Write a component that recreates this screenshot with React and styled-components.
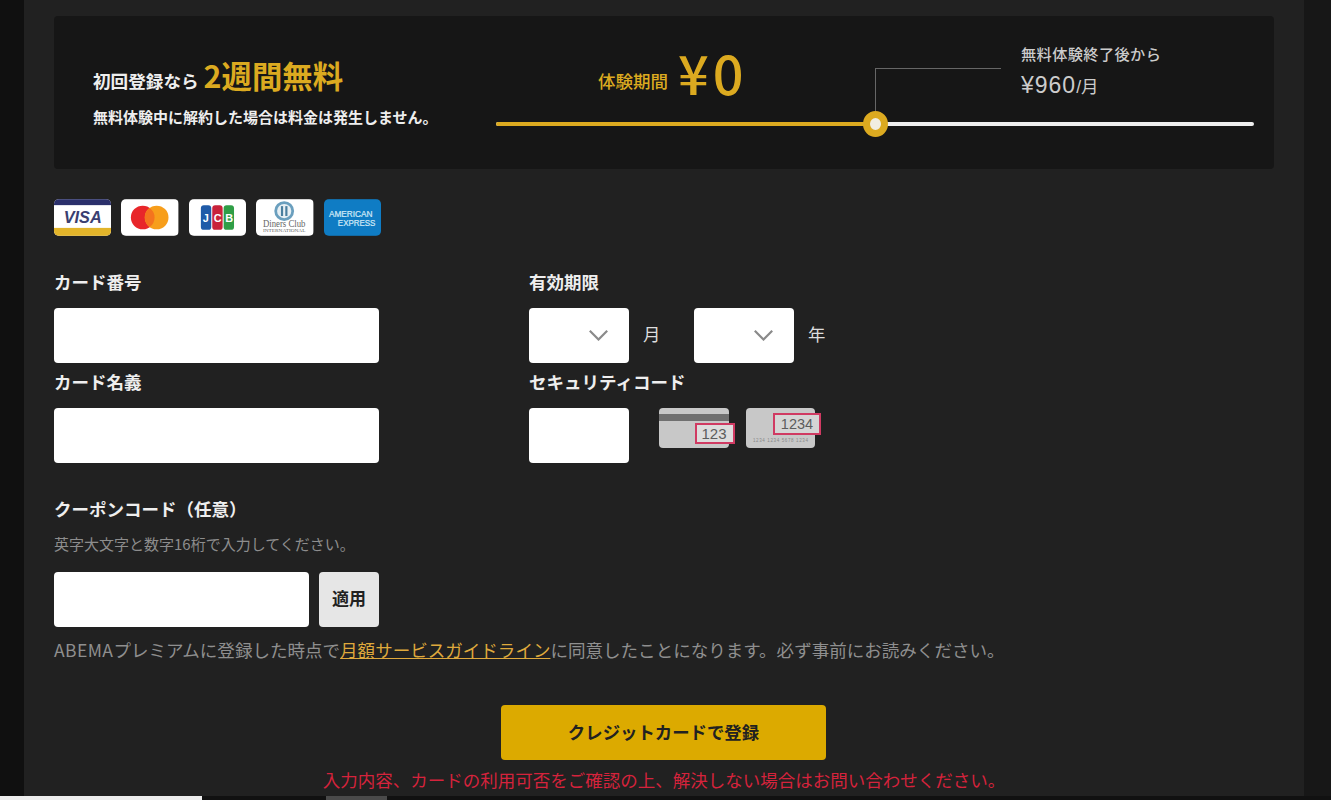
import React from "react";
import styled, { createGlobalStyle } from "styled-components";

const Global = createGlobalStyle`
  html, body { margin: 0; padding: 0; background: #111; }
  body { font-family: "Noto Sans CJK JP", "Noto Sans", sans-serif; }
  * { box-sizing: border-box; }
`;

const Page = styled.div`
  position: relative;
  height: 800px;
  overflow: hidden;
  padding: 0 27px 0 24px;
  background: linear-gradient(90deg, #101010 50%, #171717 50%);
`;
const Panel = styled.main`
  height: 800px;
  background: #212121;
  padding: 16px 30px 0;
`;
const Banner = styled.section`
  display: flex;
  height: 153px;
  background: #161616;
  border-radius: 4px;
  padding: 0 20px 0 39px;
`;
const Pitch = styled.div`
  width: 403px;
  flex: none;
  padding-top: 40px;
`;
const PitchHead = styled.div`
  display: flex;
  align-items: baseline;
  gap: 5px;
  height: 38px;
  color: #eee;
  font-size: 17.6px;
  font-weight: 700;
  line-height: 38px;
`;
const Accent = styled.span`
  color: #dcaa20;
  font-size: 30.4px;
  font-weight: 700;
`;
const PitchNote = styled.p`
  margin: 13px 0 0;
  color: #eee;
  font-size: 15px;
  font-weight: 700;
  line-height: 20px;
`;
const Timeline = styled.div`
  flex: 1;
  display: grid;
  grid-template-columns: 379px 1fr;
  grid-template-rows: 100px 16px;
`;
const TrialPrice = styled.div`
  display: flex;
  align-items: center;
  gap: 10px;
  padding: 12px 0 0 102px;
  color: #dcaa20;
`;
const TrialLabel = styled.span`
  font-size: 17.5px;
  font-weight: 500;
  padding-top: 16px;
`;
const TrialAmount = styled.span`
  font-size: 54px;
  font-weight: 500;
  line-height: 56px;
  letter-spacing: 4px;
`;
const AfterTrial = styled.div`
  position: relative;
  padding: 27px 0 0 146px;
  color: #ccc;
`;
const Connector = styled.span`
  position: absolute;
  left: 0;
  top: 52px;
  width: 126px;
  height: 48px;
  border-left: 1px solid #666;
  border-top: 1px solid #666;
`;
const AfterLabel = styled.div`
  font-size: 15.2px;
  line-height: 20px;
  letter-spacing: 0.4px;
  font-weight: 500;
`;
const AfterPrice = styled.div`
  margin-top: 8px;
  font-size: 23px;
  line-height: 28px;
  font-family: "Liberation Sans", "Noto Sans CJK JP", sans-serif;
  letter-spacing: 1px;
  small { font-size: 17.5px; font-weight: 400; letter-spacing: 0; }
`;
const Track = styled.div`
  grid-column: 1 / 3;
  position: relative;
  align-self: center;
  height: 4px;
  border-radius: 2px;
  background: #eee;
`;
const TrackFill = styled.div`
  width: 379px;
  height: 100%;
  border-radius: 2px;
  background: #dcaa20;
`;
const Knob = styled.span`
  position: absolute;
  left: 367px;
  top: -11px;
  width: 25px;
  height: 26px;
  border-radius: 50%;
  border: 7px solid #dcaa20;
  background: #f1eee2;
`;
const CardRow = styled.div`
  display: flex;
  gap: 10px;
  margin-top: 30px;
`;
const CardBadge = styled.svg`
  display: block;
  width: 57.4px;
  height: 37px;
  border-radius: 5px;
`;
const FormGrid = styled.div`
  display: grid;
  grid-template-columns: 475px 1fr;
  margin-top: 35px;
`;
const Field = styled.div`
  height: 100px;
`;
const Label = styled.div`
  color: #eee;
  font-size: 17.5px;
  font-weight: 700;
  line-height: 22px;
  height: 37px;
`;
const Input = styled.div`
  width: ${(p) => p.$w}px;
  height: 55px;
  background: #fff;
  border-radius: 4px;
`;
const Line = styled.div`
  display: flex;
  align-items: center;
`;
const SelectBox = styled.div`
  position: relative;
  width: 100px;
  height: 55px;
  background: #fff;
  border-radius: 4px;
`;
const Chevron = styled.svg`
  position: absolute;
  left: 60px;
  top: 22px;
  width: 19px;
  height: 11px;
`;
const Unit = styled.span`
  width: 65px;
  padding-left: 14px;
  padding-bottom: 5px;
  color: #ddd;
  font-size: 17.4px;
`;
const CvcArt = styled.svg`
  display: block;
  width: ${(p) => p.$w}px;
  height: 42px;
  margin-left: ${(p) => p.$ml}px;
  align-self: flex-start;
`;
const Coupon = styled.div`
  margin-top: 27px;
`;
const Hint = styled.p`
  margin: -1px 0 0;
  color: #8d8d8d;
  font-size: 15px;
  line-height: 20px;
`;
const CouponRow = styled.div`
  display: flex;
  gap: 10px;
  margin-top: 18px;
`;
const Apply = styled.button`
  width: 60px;
  height: 55px;
  border: 0;
  border-radius: 4px;
  background: #e6e6e6;
  color: #212121;
  font: 700 17px "Noto Sans CJK JP", sans-serif;
  padding: 0 0 5px;
`;
const Notice = styled.p`
  margin: 10px 0 0;
  color: #8f8f8f;
  font-size: 17.55px;
  line-height: 26px;
  white-space: nowrap;
  a { color: #dfa93c; text-decoration: underline; }
`;
const Brand = styled.span`
  letter-spacing: 0.4px;
`;
const Submit = styled.button`
  display: block;
  width: 325px;
  height: 55px;
  margin: 42px 0 0 447px;
  border: 0;
  border-radius: 4px;
  background: #dcaa00;
  color: #212121;
  font: 700 17.4px "Noto Sans CJK JP", sans-serif;
  padding: 0 0 3px;
`;
const ErrorText = styled.p`
  margin: 7px 0 0;
  color: #d5233c;
  font-size: 17.5px;
  line-height: 26px;
  text-align: center;
  white-space: nowrap;
`;
const BottomBar = styled.div`
  position: absolute;
  left: 0;
  right: 0;
  bottom: 0;
  height: 4px;
  display: flex;
  background: #111;
`;
const BarLight = styled.div`
  width: 202px;
  background: #eee;
`;
const BarThumb = styled.div`
  width: 61px;
  margin-left: 124px;
  background: #4a4a4a;
`;

const Visa = () => (
  <CardBadge viewBox="0 0 58 37">
    <rect width="58" height="37" fill="#fff" />
    <rect width="58" height="6" fill="#2a2f6b" />
    <rect y="29" width="58" height="8" fill="#e2b42a" />
    <text x="29" y="24" textAnchor="middle" fontFamily="Liberation Sans" fontSize="16.5" fontWeight="700" fontStyle="italic" fill="#3a3e70">VISA</text>
  </CardBadge>
);
const Master = () => (
  <CardBadge viewBox="0 0 58 37">
    <rect width="58" height="37" fill="#fff" />
    <circle cx="22" cy="18.5" r="12" fill="#e8262a" />
    <circle cx="36" cy="18.5" r="12" fill="#f79e1b" />
    <path d="M29 8.8a12 12 0 0 1 0 19.4a12 12 0 0 1 0-19.4z" fill="#f4741e" />
  </CardBadge>
);
const Jcb = () => (
  <CardBadge viewBox="0 0 58 37">
    <rect width="58" height="37" fill="#fff" />
    <rect x="12" y="6" width="10.5" height="25" rx="3" fill="#1f5ba8" />
    <rect x="23.5" y="6" width="10.5" height="25" rx="3" fill="#c8223a" />
    <rect x="35" y="6" width="10.5" height="25" rx="3" fill="#2f9e46" />
    <text x="17" y="23" textAnchor="middle" fontFamily="Liberation Sans" fontSize="11" fontWeight="700" fill="#fff">J</text>
    <text x="29" y="23" textAnchor="middle" fontFamily="Liberation Sans" fontSize="11" fontWeight="700" fill="#fff">C</text>
    <text x="40.5" y="23" textAnchor="middle" fontFamily="Liberation Sans" fontSize="11" fontWeight="700" fill="#fff">B</text>
  </CardBadge>
);
const Diners = () => (
  <CardBadge viewBox="0 0 58 37">
    <rect width="58" height="37" fill="#fff" />
    <circle cx="28.5" cy="12" r="10" fill="#6a9fbe" />
    <circle cx="28.5" cy="12" r="7.2" fill="#e8f0f4" />
    <rect x="25.2" y="7" width="2.2" height="10" fill="#4a7f9f" />
    <rect x="29.6" y="7" width="2.2" height="10" fill="#4a7f9f" />
    <text x="7" y="28" fontFamily="Liberation Serif" fontSize="10" fill="#666" textLength="43" lengthAdjust="spacingAndGlyphs">Diners Club</text>
    <text x="7" y="33.5" fontFamily="Liberation Serif" fontSize="4.4" fill="#666" textLength="43" lengthAdjust="spacingAndGlyphs">INTERNATIONAL</text>
  </CardBadge>
);
const Amex = () => (
  <CardBadge viewBox="0 0 58 37">
    <rect width="58" height="37" fill="#0f7cc4" />
    <text x="5" y="18" fontFamily="Liberation Sans" fontSize="9" fill="#cfe8f6" stroke="#cfe8f6" strokeWidth="0.25" textLength="44" lengthAdjust="spacingAndGlyphs">AMERICAN</text>
    <text x="14" y="27.5" fontFamily="Liberation Sans" fontSize="9" fill="#cfe8f6" stroke="#cfe8f6" strokeWidth="0.25" textLength="38" lengthAdjust="spacingAndGlyphs">EXPRESS</text>
  </CardBadge>
);

const Down = () => (
  <Chevron viewBox="0 0 19 11" fill="none" stroke="#8a8a8a" strokeWidth="2.2">
    <path d="M0.8 0.8 L9.5 9.5 L18.2 0.8" />
  </Chevron>
);

const App = () => (
  <>
    <Global />
    <Page>
      <Panel>
        <Banner>
          <Pitch>
            <PitchHead>初回登録なら<Accent>2週間無料</Accent></PitchHead>
            <PitchNote>無料体験中に解約した場合は料金は発生しません。</PitchNote>
          </Pitch>
          <Timeline>
            <TrialPrice>
              <TrialLabel>体験期間</TrialLabel>
              <TrialAmount>¥0</TrialAmount>
            </TrialPrice>
            <AfterTrial>
              <Connector />
              <AfterLabel>無料体験終了後から</AfterLabel>
              <AfterPrice>¥960<small>/月</small></AfterPrice>
            </AfterTrial>
            <Track>
              <TrackFill />
              <Knob />
            </Track>
          </Timeline>
        </Banner>
        <CardRow>
          <Visa /><Master /><Jcb /><Diners /><Amex />
        </CardRow>
        <FormGrid>
          <Field>
            <Label>カード番号</Label>
            <Input $w={325} />
          </Field>
          <Field>
            <Label>有効期限</Label>
            <Line>
              <SelectBox><Down /></SelectBox>
              <Unit>月</Unit>
              <SelectBox><Down /></SelectBox>
              <Unit>年</Unit>
            </Line>
          </Field>
          <Field>
            <Label>カード名義</Label>
            <Input $w={325} />
          </Field>
          <Field>
            <Label>セキュリティコード</Label>
            <Line>
              <Input $w={100} />
              <CvcArt $w={78} $ml={30} viewBox="0 0 78 42">
                <rect x="0" y="0" width="70" height="40" rx="4" fill="#c8c8c8" />
                <rect x="0" y="6" width="70" height="7" fill="#707070" />
                <rect x="37" y="16" width="38" height="19" fill="#ddd" stroke="#d03a62" strokeWidth="2" />
                <text x="55" y="31" textAnchor="middle" fontFamily="Liberation Sans" fontSize="15" fill="#5c5c5c">123</text>
              </CvcArt>
              <CvcArt $w={78} $ml={9} viewBox="0 0 78 42">
                <rect x="0" y="0" width="69" height="40" rx="4" fill="#c8c8c8" />
                <rect x="28" y="6" width="46" height="20" fill="#d5d5d5" stroke="#d03a62" strokeWidth="2" />
                <text x="51" y="21" textAnchor="middle" fontFamily="Liberation Sans" fontSize="14.5" fill="#5c5c5c">1234</text>
                <text x="7" y="34" fontFamily="Liberation Sans" fontSize="4.5" fill="#888" textLength="55">1234 1234 5678 1234</text>
              </CvcArt>
            </Line>
          </Field>
        </FormGrid>
        <Coupon>
          <Label>クーポンコード（任意）</Label>
          <Hint>英字大文字と数字16桁で入力してください。</Hint>
          <CouponRow>
            <Input $w={255} />
            <Apply>適用</Apply>
          </CouponRow>
        </Coupon>
        <Notice><Brand>ABEMA</Brand>プレミアムに登録した時点で<a>月額サービスガイドライン</a>に同意したことになります。必ず事前にお読みください。</Notice>
        <Submit>クレジットカードで登録</Submit>
        <ErrorText>入力内容、カードの利用可否をご確認の上、解決しない場合はお問い合わせください。</ErrorText>
      </Panel>
      <BottomBar>
        <BarLight />
        <BarThumb />
      </BottomBar>
    </Page>
  </>
);

export default App;
